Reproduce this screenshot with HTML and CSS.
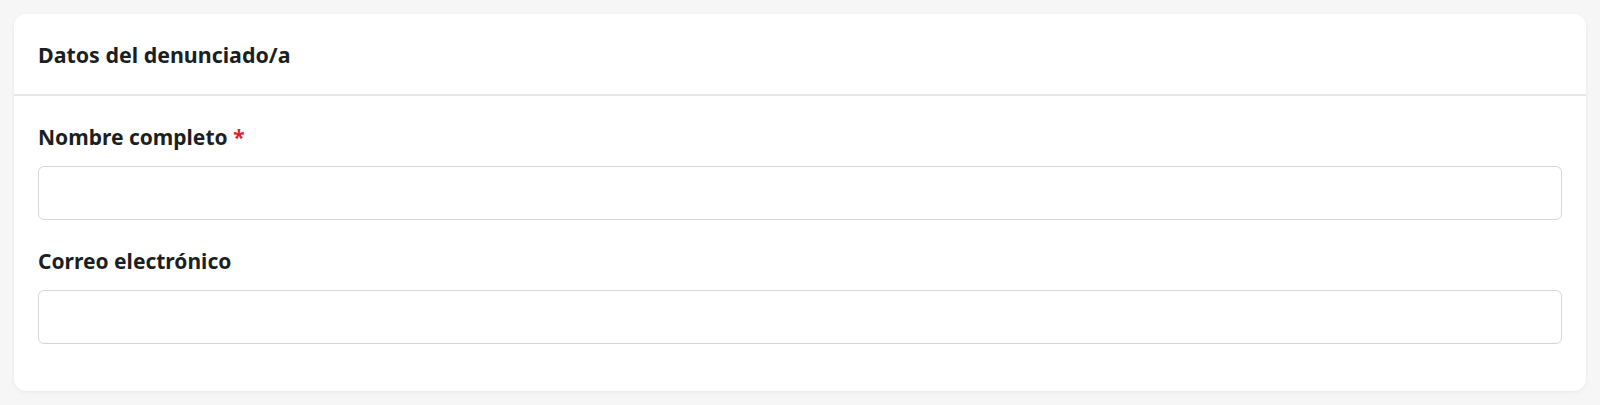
FILE: index.html
```html
<!DOCTYPE html>
<html lang="es">
<head>
  <meta charset="UTF-8" />
  <meta name="viewport" content="width=device-width, initial-scale=1.0" />
  <title>Datos del denunciado/a</title>
  <link rel="stylesheet" href="styles.css">
</head>
<body>
  <!-- Card -->
  <section class="card">
    <header class="card-header">
      <h2>Datos del denunciado/a</h2>
    </header>

    <form class="card-body">
      <div class="field">
        <label for="fullName">Nombre completo <span class="required">*</span></label>
        <input type="text" id="fullName" name="fullName" required>
      </div>

      <div class="field">
        <label for="email">Correo electrónico</label>
        <input type="email" id="email" name="email">
      </div>
    </form>
  </section>
</body>
</html>
```

FILE: styles.css
```css
body {
  margin: 0;
  padding: 14px;
  background-color: #f6f6f6;
  font-family: "Noto Sans", "Open Sans", sans-serif;
  color: #1b1f23;
}
.card {
  background-color: #fff;
  border-radius: 12px;
  box-shadow: 0 1px 4px rgba(0, 0, 0, 0.06);
}
.card-header {
  padding: 0 24px;
  height: 80px;
  display: flex;
  align-items: center;
  border-bottom: 2px solid #e6e6e6;
}
.card-header h2 {
  margin: 0;
  font-size: 21.4px;
  font-weight: 700;
}
.card-body {
  padding: 26px 24px 47px;
  display: flex;
  flex-direction: column;
  gap: 26px;
}
.field label {
  display: block;
  font-size: 21px;
  font-weight: 700;
  line-height: 30px;
  margin-bottom: 14px;
}
.required {
  color: #dc2626;
}
.field input {
  display: block;
  box-sizing: border-box;
  width: 100%;
  height: 54px;
  padding: 0 14px;
  border: 1.5px solid #d3d8de;
  border-radius: 6px;
  font: inherit;
  font-size: 18px;
}
```
